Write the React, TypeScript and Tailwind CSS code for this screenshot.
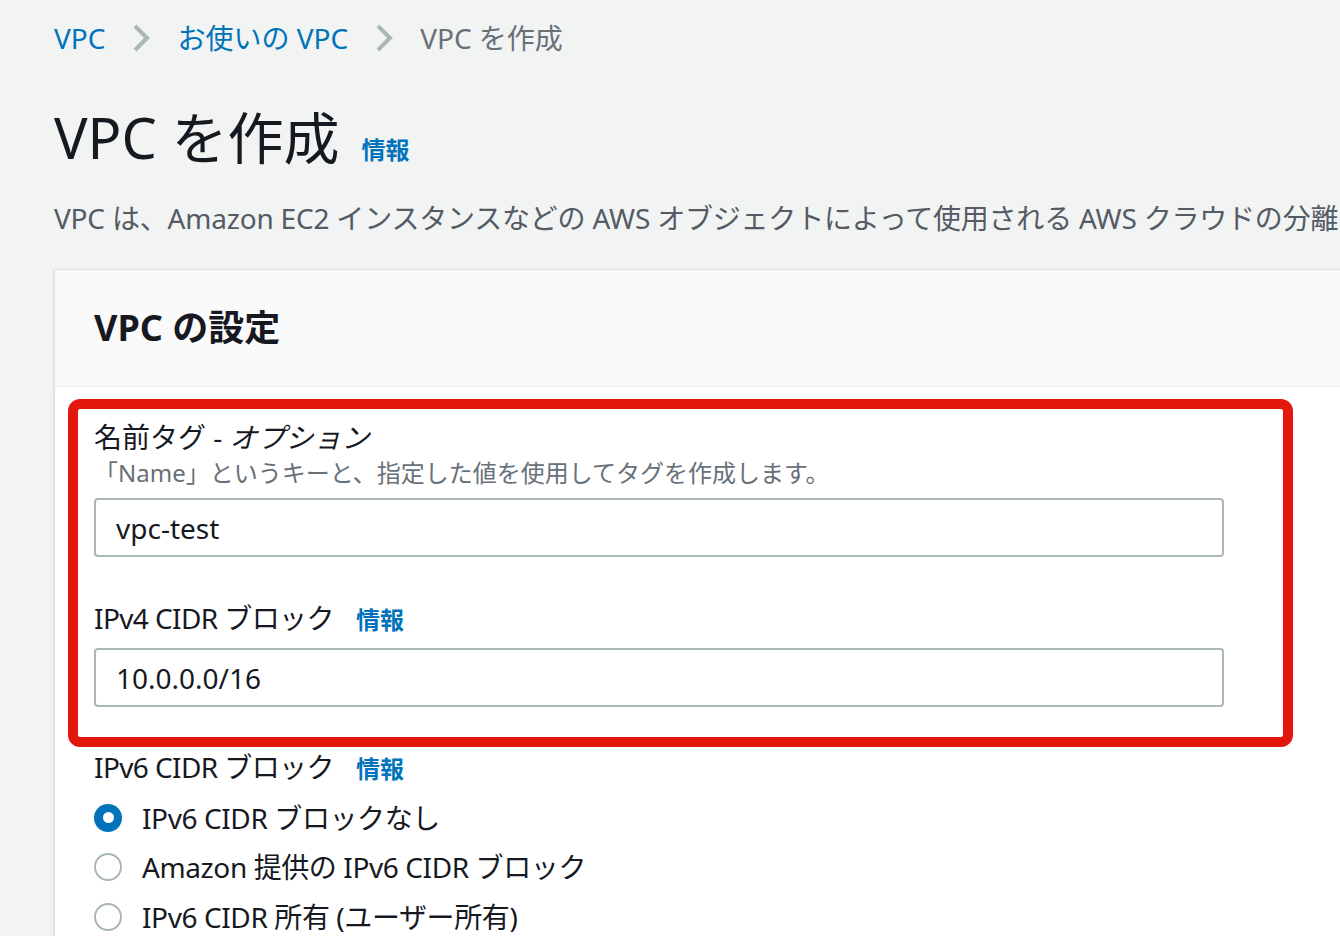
import React from "react";

const font = { fontFamily: '"Noto Sans", "Noto Sans CJK JP", sans-serif' };

const Chevron: React.FC = () => (
  <svg width="22" height="30" viewBox="0 0 22 30" className="mx-[25px] shrink-0">
    <path d="M5 3 L17 15 L5 27" fill="none" stroke="#aab7b8" strokeWidth="4" />
  </svg>
);

const Info: React.FC<{ className?: string }> = ({ className = "" }) => (
  <span className={"text-[24px] font-bold tracking-normal text-[#0073bb] " + className}>情報</span>
);

const Radio: React.FC<{ checked?: boolean; label: string }> = ({ checked, label }) => (
  <label className="flex h-[49.5px] items-center gap-[20px]">
    {checked ? (
      <span className="flex h-[28px] w-[28px] items-center justify-center rounded-full bg-[#0073bb]">
        <span className="h-[11px] w-[11px] rounded-full bg-white" />
      </span>
    ) : (
      <span className="h-[28px] w-[28px] rounded-full border-2 border-[#aab7b8] bg-white" />
    )}
    <span className="text-[28px] leading-[36px] tracking-[-0.4px] text-[#16191f]">{label}</span>
  </label>
);

const App: React.FC = () => {
  return (
    <div className="h-[936px] w-[1340px] overflow-hidden bg-[#f2f3f3]" style={font}>
      <div className="pl-[54px]">
        {/* breadcrumbs */}
        <nav className="box-content flex h-[40px] items-center pt-[18px] text-[28px] leading-[40px]">
          <span className="text-[#0073bb]">VPC</span>
          <Chevron />
          <span className="text-[#0073bb]">お使いの VPC</span>
          <Chevron />
          <span className="text-[#687078]">VPC を作成</span>
        </nav>

        <header className="mt-[47px] flex items-baseline">
          <h1 className="text-[56px] leading-[64px] text-[#16191f]">VPC を作成</h1>
          <Info className="ml-[22px]" />
        </header>

        <p className="mt-[31px] whitespace-nowrap text-[28px] leading-[36px] tracking-[-0.2px] text-[#545b64]">
          VPC は、Amazon EC2 インスタンスなどの AWS オブジェクトによって使用される AWS クラウドの分離されたセクションです。
        </p>

        <section className="mt-[33px] w-[1400px] border-l border-t border-[#dfe3e3] bg-white shadow-[0_1px_2px_rgba(0,28,36,0.25)]">
          <div className="flex h-[117px] items-center border-b border-[#eaeded] bg-[#fafafa] pl-[39px]">
            <h2 className="text-[36px] font-bold leading-[44px] text-[#16191f]">VPC の設定</h2>
          </div>

          <div className="pb-[40px]">
            <div className="ml-[13px] mt-[12px] w-[1225px] rounded-[12px] border-[10px] border-[#e3180c] pb-[30px] pl-[16px] pr-[59px] pt-[10px]">
              <div className="text-[28px] leading-[36px] text-[#16191f]">
                名前タグ - <span className="italic">オプション</span>
              </div>
              <div className="mt-[2px] text-[24px] leading-[32px] text-[#687078]">
                「Name」というキーと、指定した値を使用してタグを作成します。
              </div>
              <div className="mt-[9px] flex h-[59px] w-[1130px] items-center rounded-[4px] border-2 border-[#aab7b8] bg-white pl-[20px] text-[28px] text-[#16191f]">
                vpc-test
              </div>

              <div className="mt-[43px] flex items-baseline text-[28px] leading-[36px] tracking-[-0.6px] text-[#16191f]">
                IPv4 CIDR ブロック
                <Info className="ml-[22px]" />
              </div>
              <div className="mt-[10px] flex h-[59px] w-[1130px] items-center rounded-[4px] border-2 border-[#aab7b8] bg-white pl-[20px] text-[28px] text-[#16191f]">
                10.0.0.0/16
              </div>
            </div>

            <div className="pl-[39px]">
              <div className="mt-[2px] flex items-baseline text-[28px] leading-[36px] tracking-[-0.6px] text-[#16191f]">
                IPv6 CIDR ブロック
                <Info className="ml-[22px]" />
              </div>
              <div className="mt-[6px] flex flex-col">
                <Radio checked label="IPv6 CIDR ブロックなし" />
                <Radio label="Amazon 提供の IPv6 CIDR ブロック" />
                <Radio label="IPv6 CIDR 所有 (ユーザー所有)" />
              </div>
            </div>
          </div>
        </section>
      </div>
    </div>
  );
};

export default App;
